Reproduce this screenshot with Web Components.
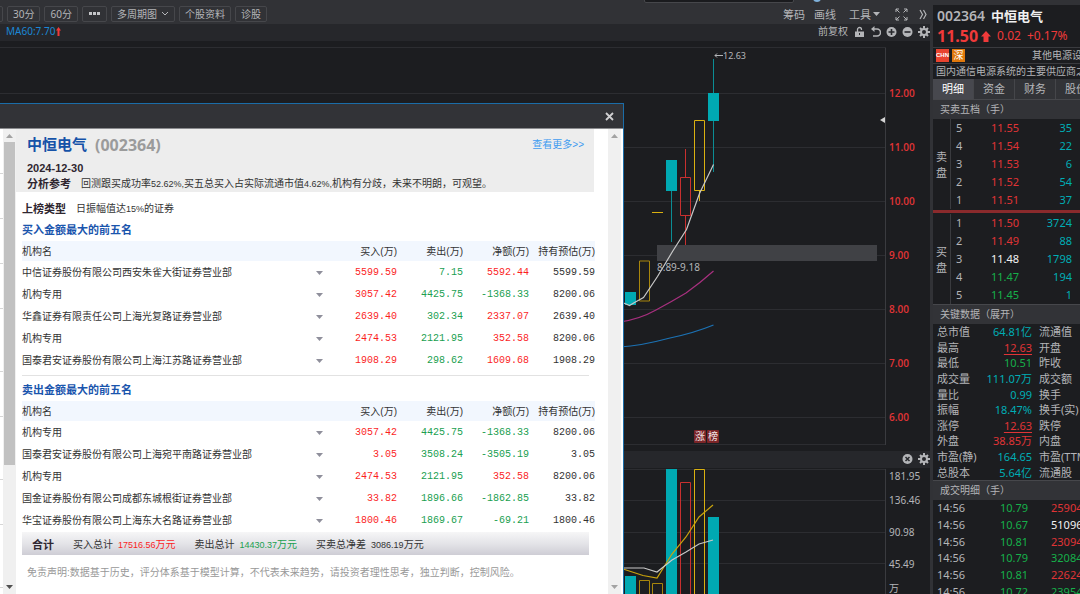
<!DOCTYPE html>
<html lang="zh-CN">
<head>
<meta charset="utf-8">
<title>中恒电气 002364</title>
<style>
html, body { margin: 0; height: 100%; }
body { overflow: hidden; background: #1c1d20; }
</style>
</head>
<body>
<stock-app></stock-app>
<script>
const SHARED = `
  * { box-sizing: border-box; }
  button { font: inherit; color: inherit; background: none; border: 0; padding: 0; margin: 0; }
  table { border-collapse: collapse; border-spacing: 0; }
  th, td { padding: 0; font-weight: inherit; text-align: left; }
  svg { display: block; }
  .r { color: #e03436; } .g { color: #16b04a; } .c { color: #00adb5; } .w { color: #f2f2f2; }
`;
class Base extends HTMLElement {
  connectedCallback() {
    if (this.shadowRoot) return;
    this.attachShadow({ mode: 'open' }).innerHTML = `<style>${SHARED}${this.css()}</style>${this.html()}`;
  }
}

const ICON = {
  gear: `<svg width="12" height="12" viewBox="0 0 12 12"><g stroke="#b4b5b8" stroke-width="2"><path d="M6 0v12M0 6h12M2 2l8 8M10 2l-8 8"/></g><circle cx="6" cy="6" r="4" fill="#b4b5b8"/><circle cx="6" cy="6" r="2" fill="#27282c"/></svg>`,
  plus: `<svg width="11" height="12" viewBox="0 0 11 12"><circle cx="5.5" cy="6" r="5" fill="#b4b5b8"/><path d="M5.5 3v6M2.5 6h6" stroke="#27282c" stroke-width="1.6"/></svg>`,
  minus: `<svg width="11" height="12" viewBox="0 0 11 12"><circle cx="5.5" cy="6" r="5" fill="#b4b5b8"/><path d="M2.5 6h6" stroke="#27282c" stroke-width="1.6"/></svg>`,
  close: `<svg width="11" height="12" viewBox="0 0 11 12"><circle cx="5.5" cy="6" r="5" fill="#b4b5b8"/><path d="M3.5 4l4 4M7.5 4l-4 4" stroke="#27282c" stroke-width="1.5"/></svg>`,
  lock: `<svg width="9" height="12" viewBox="0 0 9 12"><path d="M2.5 6V3.500a2 2 0 0 1 4 0V4" fill="none" stroke="#b4b5b8" stroke-width="1.3"/><path d="M0 5.500h9V11H0z" fill="#b4b5b8"/><path d="M4 7h1v2H4z" fill="#27282c"/></svg>`,
  undo: `<svg width="10" height="12" viewBox="0 0 10 12"><path d="M1 3h5a3.300 3.300 0 0 1 0 7H2" fill="none" stroke="#b4b5b8" stroke-width="1.500"/><path d="M0 3l3.500-3v6z" fill="#b4b5b8"/></svg>`
};

customElements.define('top-toolbar', class extends Base {
  css() { return `
    :host { display: flex; height: 24px; background: #313236; color: #b4b5b8; font: 10px/15px "Noto Sans", "Noto Sans CJK SC", sans-serif; padding: 0 3px 0 0; position: relative; }
    .left { display: flex; gap: 4px; margin: 6px 0 0 -20px; height: 16px; }
    .left button { border: 1px solid #46474b; border-radius: 2px; padding: 0 5px; height: 16px; line-height: 14px; display: flex; align-items: center; gap: 4px; white-space: nowrap; }
    .stub { width: 23px; }
    .right { margin-left: auto; display: flex; align-items: center; padding-top: 4px; font-size: 11px; gap: 9px; white-space: nowrap; }
    .right button { display: flex; align-items: center; gap: 2px; }
    .tool { margin: 0 6px 0 4px; }
    .more { margin-left: 2px; }
    input { position: absolute; right: 136px; top: -14px; width: 150px; height: 17px; background: #1a1b1e; border: 1px solid #46474b; border-radius: 2px; }
    .dot { position: absolute; right: 109px; top: -6px; width: 8px; height: 8px; border-radius: 4px; background: #7fb2dc; }
  `; }
  html() { return `
    <input aria-label="搜索"><i class="dot"></i>
    <div class="left">
      <button class="stub" aria-label="周期"></button><button>30分</button><button>60分</button>
      <button aria-label="更多周期"><svg width="13" height="4"><path d="M0 0h3v3H0zM4 0h3v3H4zM8 0h3v3H8z" transform="translate(1)" fill="#c4c5c8"/></svg></button>
      <button>多周期图<svg width="8" height="6"><path d="M1 1l3 3 3-3" fill="none" stroke="#b4b5b8"/></svg></button>
      <button>个股资料</button><button>诊股</button>
    </div>
    <div class="right">
      <button>筹码</button><button>画线</button>
      <button class="tool">工具<svg width="7" height="4"><path d="M0 0h7l-3.500 4z" fill="#b4b5b8"/></svg></button>
      <button aria-label="全屏"><svg width="13" height="13" fill="none" stroke="#b4b5b8"><path d="M1 4V1h3M1 1l3.500 3.500M9 1h3v3M12 1L8.500 4.500M1 9v3h3M1 12l3.500-3.500M12 9v3H9M12 12L8.500 8.500"/></svg></button>
      <button class="more" aria-label="展开"><svg width="8" height="11" fill="none" stroke="#b4b5b8" stroke-width="1.2"><path d="M1 1l2.500 4.500L1 10M4.500 1L7 5.500 4.500 10"/></svg></button>
    </div>`; }
});

customElements.define('indicator-bar', class extends Base {
  css() { return `
    :host { display: flex; align-items: center; justify-content: space-between; height: 17px; flex: none; box-sizing: border-box; background: #26272b; padding: 0 0 2px 6px; color: #b4b5b8; font: 10px/15px "Noto Sans", "Noto Sans CJK SC", sans-serif; }
    .tools, .ma { display: flex; align-items: center; gap: 5px; }
    .ma { color: #1b87d6; gap: 1px; }
  `; }
  html() {
    return this.hasAttribute('volume')
      ? `<span></span><div class="tools"><button aria-label="关闭">${ICON.close}</button><button aria-label="设置">${ICON.gear}</button></div>`
      : `<span class="ma">MA60:7.70<svg width="5" height="9"><path d="M2.500 0L5 3.500H3.500V9h-2V3.500H0z" fill="#f03a3a"/></svg></span>
         <div class="tools"><button>前复权</button><button aria-label="锁定" style="padding:0 2px">${ICON.lock}</button><button aria-label="撤销">${ICON.undo}</button><button aria-label="放大">${ICON.plus}</button><button aria-label="缩小">${ICON.minus}</button><button aria-label="设置">${ICON.gear}</button></div>`;
  }
});

const hline = ys => ys.map(y => `<path d="M-3000 ${y}.5H886" stroke="#2c2d31"/>`).join('');
const PLOT_CSS = `
  :host { display: grid; grid-template-columns: minmax(0, 1fr) 44px; overflow: hidden; background: #1c1d20; font: 10px/16px "Noto Sans", "Noto Sans CJK SC", sans-serif; }
  svg { width: 100%; overflow: visible; }
  .axis { padding-left: 3px; display: flex; flex-direction: column; }
  .axis span { display: flex; align-items: center; flex: none; }
`;
customElements.define('price-chart', class extends Base {
  css() { return PLOT_CSS + `
    :host { height: 410px; flex: none; }
    svg { height: 410px; }
    .axis { padding-top: 25px; color: #e03436; font-family: "Open Sans", sans-serif; font-weight: 600; }
    .axis span { height: 54px; }
    text { font: 10px "Noto Sans", "Noto Sans CJK SC", sans-serif; }
  `; }
  html() { return `
    <svg viewBox="0 41 886 410" preserveAspectRatio="xMaxYMin meet">
      ${hline([47, 93, 147, 201, 255, 309, 363, 417, 444])}
      <path d="M885.500 48V445" stroke="#3a3b3f"/>
      <rect x="657" y="245" width="220" height="16" fill="#404145"/>
      <path d="M671.500 190V242M713.500 59V172" stroke="#0b8d94"/>
      <path d="M625 292h11v13h-11zM666 160h11v31h-11zM708 93h11v28h-11z" fill="#00a9b2"/>
      <path d="M639.500 261v40h10v-40z" fill="none" stroke="#a8860c"/>
      <path d="M652 212.500h11M694.500 120.500v70h10v-70zM699.500 191v10" fill="none" stroke="#d9b010"/>
      <path d="M680.500 177.500v38h10v-38zM685.500 149v28M685.500 216v29" fill="none" stroke="#c9302f"/>
      <g fill="none" stroke-width="1.2">
        <path d="M620 302l5 1.500 4.500 2 5-3 9-5 14-21 15-25 14-22 13-36 14-29" stroke="#c8c8c8"/>
        <path d="M620 322q20-3 36-12 15-8 30-17 14-10 27.500-22" stroke="#a8307f"/>
        <path d="M620 347q20-1 50-9 24-5 43.500-13" stroke="#1c72b4"/>
        <path d="M715 55.500h8M717 53.500l-2 2 2 2" stroke="#b4b5b8" stroke-width="1"/>
      </g>
      <path d="M880 120l5-3v6z" fill="#d4d4d4"/>
      <text x="723" y="59" fill="#b4b5b8" style="font-size:9px">12.63</text>
      <text x="657" y="271" fill="#b4b5b8">8.89-9.18</text>
      <rect x="694" y="430" width="12" height="13" rx="1" fill="#7b2528"/><rect x="707" y="430" width="12" height="13" rx="1" fill="#7b2528"/>
      <text x="695" y="440" fill="#f0e4e4">涨</text><text x="708" y="440" fill="#f0e4e4">榜</text>
    </svg>
    <div class="axis">${[12, 11, 10, 9, 8, 7, 6].map(v => `<span>${v}.00</span>`).join('')}</div>`; }
});
customElements.define('volume-chart', class extends Base {
  css() { return PLOT_CSS + `
    :host { flex: 1; min-height: 0; }
    svg { height: 126px; }
    .axis { color: #b4b5b8; }
    .axis span { height: 32px; } .axis .end { height: 16px; }
  `; }
  html() { return `
    <svg viewBox="0 468 886 126" preserveAspectRatio="xMaxYMin meet">
      ${hline([469, 500, 532, 563])}
      <path d="M885.500 469V594" stroke="#3a3b3f"/>
      <path d="M625 576h11v20h-11zM666 469h11v127h-11zM708 517h11v79h-11z" fill="#00a9b2"/>
      <path d="M639.500 596v-15.500h10V596M652.500 596v-12.500h10V596" fill="none" stroke="#a8860c"/>
      <path d="M694.500 596V469.500h10V596" fill="none" stroke="#d9b010"/>
      <path d="M680.500 596V482.500h10V596" fill="none" stroke="#c9302f"/>
      <path d="M620 568l23 7.500 14 2.500 15-24 14-17 13-20 14-12" fill="none" stroke="#c9a30c" stroke-width="1.200"/>
      <path d="M620 568h24l13 4 15-12 14-8 13-8 14-4" fill="none" stroke="#c8c8c8" stroke-width="1.200"/>
    </svg>
    <div class="axis"><span class="end">181.95</span><span>136.46</span><span>90.98</span><span>45.49</span><span class="end">万</span></div>`; }
});

customElements.define('scroll-rail', class extends Base {
  css() { return `
    :host { display: flex; flex-direction: column; align-items: center; justify-content: space-between; width: 13px; flex: none; background: #f0f0f0; padding: 5px 0 4px; color: #a3a3a3; }
    .thumb { width: 11px; flex: 0 0 323px; margin: 3px 0 auto; background: #c1c1c1; }
    .dark { color: #505050; }
  `; }
  html() {
    const t = this.hasAttribute('thumb');
    return `<svg width="7" height="5"><path d="M0 4h7L3.500 0z" fill="currentColor"/></svg>${t ? '<div class="thumb"></div>' : ''}<svg class="${t ? 'dark' : ''}" width="7" height="5"><path d="M0 0h7L3.500 4z" fill="currentColor"/></svg>`;
  }
});

customElements.define('broker-table', class extends Base {
  css() { return `
    :host { display: block; color: #333; }
    h2 { margin: 0; font-size: 11px; line-height: 22px; font-weight: 700; color: #1a55ad; }
    table { width: 100%; table-layout: fixed; }
    thead { background: #f2f7fe; }
    thead tr { height: 20px; }
    tbody tr { height: 22px; }
    th, td { white-space: nowrap; line-height: 18px; padding-top: 2px; }
    .arrow { width: 24px; } .num { width: 66px; text-align: right; }
    td.num { font-family: "Liberation Mono", monospace; }
    .up { color: #fb1f1f; } .down { color: #20a050; }
    td button { display: block; padding: 7px 9px; }
  `; }
  html() {
    const rows = this.querySelector('script').textContent.trim().split('\n').map(l => l.trim().split(/\s+/));
    const sign = v => v.startsWith('-') ? 'down' : 'up';
    return `<h2>${this.getAttribute('heading')}</h2><table>
      <thead><tr><th>机构名</th><th class="arrow"></th><th class="num">买入(万)</th><th class="num">卖出(万)</th><th class="num">净额(万)</th><th class="num">持有预估(万)</th></tr></thead>
      <tbody>${rows.map(([n, b, s, d, h]) => `<tr><td>${n}</td><td class="arrow"><button aria-label="展开${n}"><svg width="7" height="4"><path d="M0 0h7l-3.500 4z" fill="#8f8f9b"/></svg></button></td><td class="num up">${b}</td><td class="num down">${s}</td><td class="num ${sign(d)}">${d}</td><td class="num">${h}</td></tr>`).join('')}</tbody></table>`;
  }
});

customElements.define('rank-dialog', class extends Base {
  css() { return `
    :host { display: flex; flex-direction: column; background: #fff; border: solid #1b6da8; border-width: 1px 1px 0 0; font: 10px/20px "Liberation Sans", "Noto Sans CJK SC", sans-serif; color: #333; overflow: hidden; }
    .bar { height: 25px; flex: none; background: #323337; border-bottom: 1px solid #8a8b8e; display: flex; justify-content: flex-end; align-items: center; padding-right: 9px; }
    .body { flex: 1; min-height: 0; display: flex; padding-right: 2px; }
    .ticks { width: 3px; flex: none; overflow: hidden; }
    .ticks i { display: block; height: 45px; border-bottom: 1px solid #d6d6d6; } .ticks .tall { height: 63px; }
    main { flex: 1; min-width: 0; overflow: hidden; }
    header { height: 63px; background: #ededed; margin-right: 14px; padding: 4px 10px 0 11px; }
    .head { display: flex; align-items: center; justify-content: space-between; line-height: 22px; height: 27px; padding-bottom: 3px; }
    h1 { margin: 0; font-size: 15px; line-height: 22px; color: #1552a8; display: flex; gap: 8px; }
    h1 span { font-family: "Noto Sans", sans-serif; font-size: 16px; color: #9b9b9b; }
    a { color: #3f9cf0; text-decoration: none; }
    b { font-size: 11px; color: #2f2630; }
    .date { line-height: 16px; display: block; }
    p { margin: 0; line-height: 16px; display: flex; gap: 10px; white-space: nowrap; }
    .n { font-size: 9px; }
    .page { padding: 7px 13px 0 6px; }
    .type { line-height: 20px; }
    hr { border: 0; height: 1px; margin: 4px 6px 3px 0; background: #e2e2e2; }
    .total { height: 23px; margin: 1px 6px 0 0; padding: 2px 10px 0; background: linear-gradient(#f6f6f7, #e4e4e8 50%, #cecdd5); display: flex; align-items: center; gap: 19px; white-space: nowrap; }
    .total .n { margin-left: 5px; }
    .n em { font-style: normal; font-size: 10px; }
    .up { color: #fb1f1f; } .down { color: #20a050; }
    .note { color: #999; padding: 10px 0 0 5px; }
  `; }
  html() { return `
    <div class="bar"><button aria-label="关闭"><svg width="9" height="9"><path d="M1 1l7 7M8 1L1 8" stroke="#d0d0d2" stroke-width="1.8"/></svg></button></div>
    <div class="body">
      <div class="ticks"><i></i><i></i><i></i><i></i><i class="tall"></i><i></i><i class="tall"></i><i></i><i class="tall"></i></div>
      <scroll-rail thumb></scroll-rail>
      <main>
        <header>
          <div class="head"><h1>中恒电气<span>(002364)</span></h1><a href="#">查看更多&gt;&gt;</a></div>
          <b class="date">2024-12-30</b>
          <p><b>分析参考</b><span>回测跟买成功率<span class="n">52.62%,</span>买五总买入占实际流通市值<span class="n">4.62%,</span>机构有分歧，未来不明朗，可观望。</span></p>
        </header>
        <div class="page">
          <p class="type"><b>上榜类型</b><span>日振幅值达<span class="n">15%</span>的证券</span></p>
          <broker-table heading="买入金额最大的前五名"><script type="text/plain">
            中信证券股份有限公司西安朱雀大街证券营业部 5599.59 7.15 5592.44 5599.59
            机构专用 3057.42 4425.75 -1368.33 8200.06
            华鑫证券有限责任公司上海光复路证券营业部 2639.40 302.34 2337.07 2639.40
            机构专用 2474.53 2121.95 352.58 8200.06
            国泰君安证券股份有限公司上海江苏路证券营业部 1908.29 298.62 1609.68 1908.29
          <\/script></broker-table>
          <hr>
          <broker-table heading="卖出金额最大的前五名"><script type="text/plain">
            机构专用 3057.42 4425.75 -1368.33 8200.06
            国泰君安证券股份有限公司上海宛平南路证券营业部 3.05 3508.24 -3505.19 3.05
            机构专用 2474.53 2121.95 352.58 8200.06
            国金证券股份有限公司成都东城根街证券营业部 33.82 1896.66 -1862.85 33.82
            华宝证券股份有限公司上海东大名路证券营业部 1800.46 1869.67 -69.21 1800.46
          <\/script></broker-table>
          <div class="total"><b>合计</b><span>买入总计<span class="n up">17516.56<em>万元</em></span></span><span>卖出总计<span class="n down">14430.37<em>万元</em></span></span><span>买卖总净差<span class="n">3086.19<em>万元</em></span></span></div>
          <p class="note">免责声明:数据基于历史，评分体系基于模型计算，不代表未来趋势，请投资者理性思考，独立判断，控制风险。</p>
        </div>
      </main>
      <scroll-rail></scroll-rail>
    </div>`; }
});

customElements.define('panel-title', class extends Base {
  css() { return `
    :host { display: block; flex: none; height: 20px; padding-left: 7px; background: #323337; border-top: 1px solid #46474b; box-sizing: border-box; font-size: 10px; line-height: 18px; white-space: nowrap; color: #b4b5b8; }`; }
  html() { return `<slot></slot>`; }
});

customElements.define('order-book', class extends Base {
  css() { return `
    :host { display: flex; flex: none; height: 90px; }
    .side { width: 18px; flex: none; border-right: 1px solid #3a3b3f; display: flex; flex-direction: column; align-items: center; justify-content: center; line-height: 16px; padding-top: 2px; }
    table { flex: 1; table-layout: fixed; width: 100%; margin-right: 8px; }
    tr { height: 18px; line-height: 18px; }
    td { text-align: right; } td:first-child { width: 16px; padding-left: 5px; text-align: left; } td:nth-child(2) { width: 52px; }
  `; }
  html() {
    const rows = this.getAttribute('rows').split(' ').map(r => r.split(','));
    const side = [...this.getAttribute('side')].map(c => `<span>${c}</span>`).join('');
    return `<div class="side">${side}</div><table>${rows.map(([i, p, k, q]) => `<tr><td>${i}</td><td class="${k}">${p}</td><td class="c">${q}</td></tr>`).join('')}</table>`;
  }
});

customElements.define('quote-panel', class extends Base {
  css() { return `
    :host { display: flex; flex-direction: column; width: 150px; flex: none; box-sizing: border-box; overflow: hidden; border: solid #313236; border-width: 5px 0 0 3px; background: #1c1d20; color: #b4b5b8; font: 11px/16px "Noto Sans", "Noto Sans CJK SC", sans-serif; white-space: nowrap; }
    .name { display: flex; gap: 6px; height: 22px; line-height: 22px; padding-left: 4px; font-size: 14px; font-weight: 600; flex: none; }
    .name b { color: #f0f0f0; font-size: 13px; font-weight: 600; }
    .price { display: flex; align-items: center; height: 20px; padding: 0 0 2px 4px; font-size: 12px; color: #f03a3a; flex: none; }
    .price b { font-size: 16px; margin-right: 3px; } .price span { margin-left: 6px; }
    .tags, .desc { border-top: 1px solid #3a3b3f; height: 16px; line-height: 15px; font-size: 10px; flex: none; padding-left: 3px; display: flex; }
    .tags i { flex: none; font-style: normal; width: 13px; height: 13px; margin: 1px 3px 0 0; line-height: 13px; text-align: center; color: #fff; background: #e8432f; }
    .tags .ch { font: 9px/13px "Liberation Sans Narrow", "Liberation Sans", sans-serif; font-size: 6px; font-weight: 700; }
    .tags .sz { background: #e0780c; }
    .tags span { margin-left: 64px; }
    nav { display: flex; height: 20px; background: #323337; flex: none; }
    nav button { width: 41px; flex: none; font-size: 11px; border-right: 1px solid #45464a; }
    nav .on { background: #47484e; color: #fff; }
    .cut { height: 5px; flex: none; background: #8a2a2c; border: solid #1c1d20; border-width: 1px 0; }
    .keys { width: 100%; height: 156px; flex: none; display: grid; grid-template-rows: repeat(10, 1fr); margin: 0; }
    .keys div { display: grid; grid-template-columns: 42px 53px 60px; padding-left: 4px; align-items: center; line-height: 15px; }
    dt, dd { margin: 0; }
    dd { text-align: right; } .keys dt:last-child { padding-left: 7px; }
    u { text-underline-offset: 2px; }
    .ticks { height: 100px; flex: none; display: grid; grid-template-rows: repeat(6, 1fr); }
    .ticks div { display: grid; grid-template-columns: 40px 51px 60px; padding-left: 4px; align-items: center; line-height: 16px; }
    .ticks span:nth-child(2) { text-align: right; } .ticks span:last-child { padding-left: 23px; }
  `; }
  html() {
    const keys = [['总市值', '64.81亿', 'c', '流通值'], ['最高', '<u>12.63</u>', 'r', '开盘'], ['最低', '10.51', 'g', '昨收'], ['成交量', '111.07万', 'c', '成交额'], ['量比', '0.99', 'c', '换手'], ['振幅', '18.47%', 'c', '换手(实)'], ['涨停', '<u>12.63</u>', 'r', '跌停'], ['外盘', '38.85万', 'r', '内盘'], ['市盈(静)', '164.65', 'c', '市盈(TTM)'], ['总股本', '5.64亿', 'c', '流通股']];
    const ticks = [['10.79', '25904', 'r'], ['10.67', '51096', 'w'], ['10.81', '23094', 'r'], ['10.79', '32084', 'g'], ['10.81', '22624', 'r'], ['10.72', '23954', 'g']];
    return `
      <div class="name">002364<b>中恒电气</b></div>
      <div class="price"><b>11.50</b><svg width="10" height="11"><path d="M5 0l5 5.500H7.500V11h-5V5.500H0z" fill="#f03a3a"/></svg><span>0.02</span><span>+0.17%</span></div>
      <div class="tags"><i class="ch">CHN</i><i class="sz">深</i><span>其他电源设备</span></div>
      <div class="desc">国内通信电源系统的主要供应商之一</div>
      <nav><button class="on">明细</button><button>资金</button><button>财务</button><button>股价</button></nav>
      <panel-title>买卖五档（手）</panel-title>
      <order-book side="卖盘" rows="5,11.55,r,35 4,11.54,r,22 3,11.53,r,6 2,11.52,r,54 1,11.51,r,37"></order-book>
      <div class="cut"></div>
      <order-book side="买盘" rows="1,11.50,r,3724 2,11.49,r,88 3,11.48,w,1798 4,11.47,g,194 5,11.45,g,1"></order-book>
      <panel-title>关键数据（展开）</panel-title>
      <dl class="keys">${keys.map(([a, v, k, b]) => `<div><dt>${a}</dt><dd class="${k}">${v}</dd><dt>${b}</dt></div>`).join('')}</dl>
      <panel-title>成交明细（手）</panel-title>
      <div class="ticks">${ticks.map(([p, q, k]) => `<div><span>14:56</span><span class="g">${p}</span><span class="${k}">${q}</span></div>`).join('')}</div>`;
  }
});

customElements.define('stock-app', class extends Base {
  css() { return `
    :host { display: flex; height: 100vh; overflow: hidden; background: #1c1d20; }
    .work { flex: 1; min-width: 0; display: flex; flex-direction: column; position: relative; }
    top-toolbar { flex: none; }
    rank-dialog { position: absolute; top: 103px; left: 0; right: 306px; bottom: 0; }
  `; }
  html() { return `
    <div class="work">
      <top-toolbar></top-toolbar>
      <indicator-bar></indicator-bar>
      <price-chart></price-chart>
      <indicator-bar volume></indicator-bar>
      <volume-chart></volume-chart>
      <rank-dialog></rank-dialog>
    </div>
    <quote-panel></quote-panel>`; }
});
</script>
</body>
</html>
